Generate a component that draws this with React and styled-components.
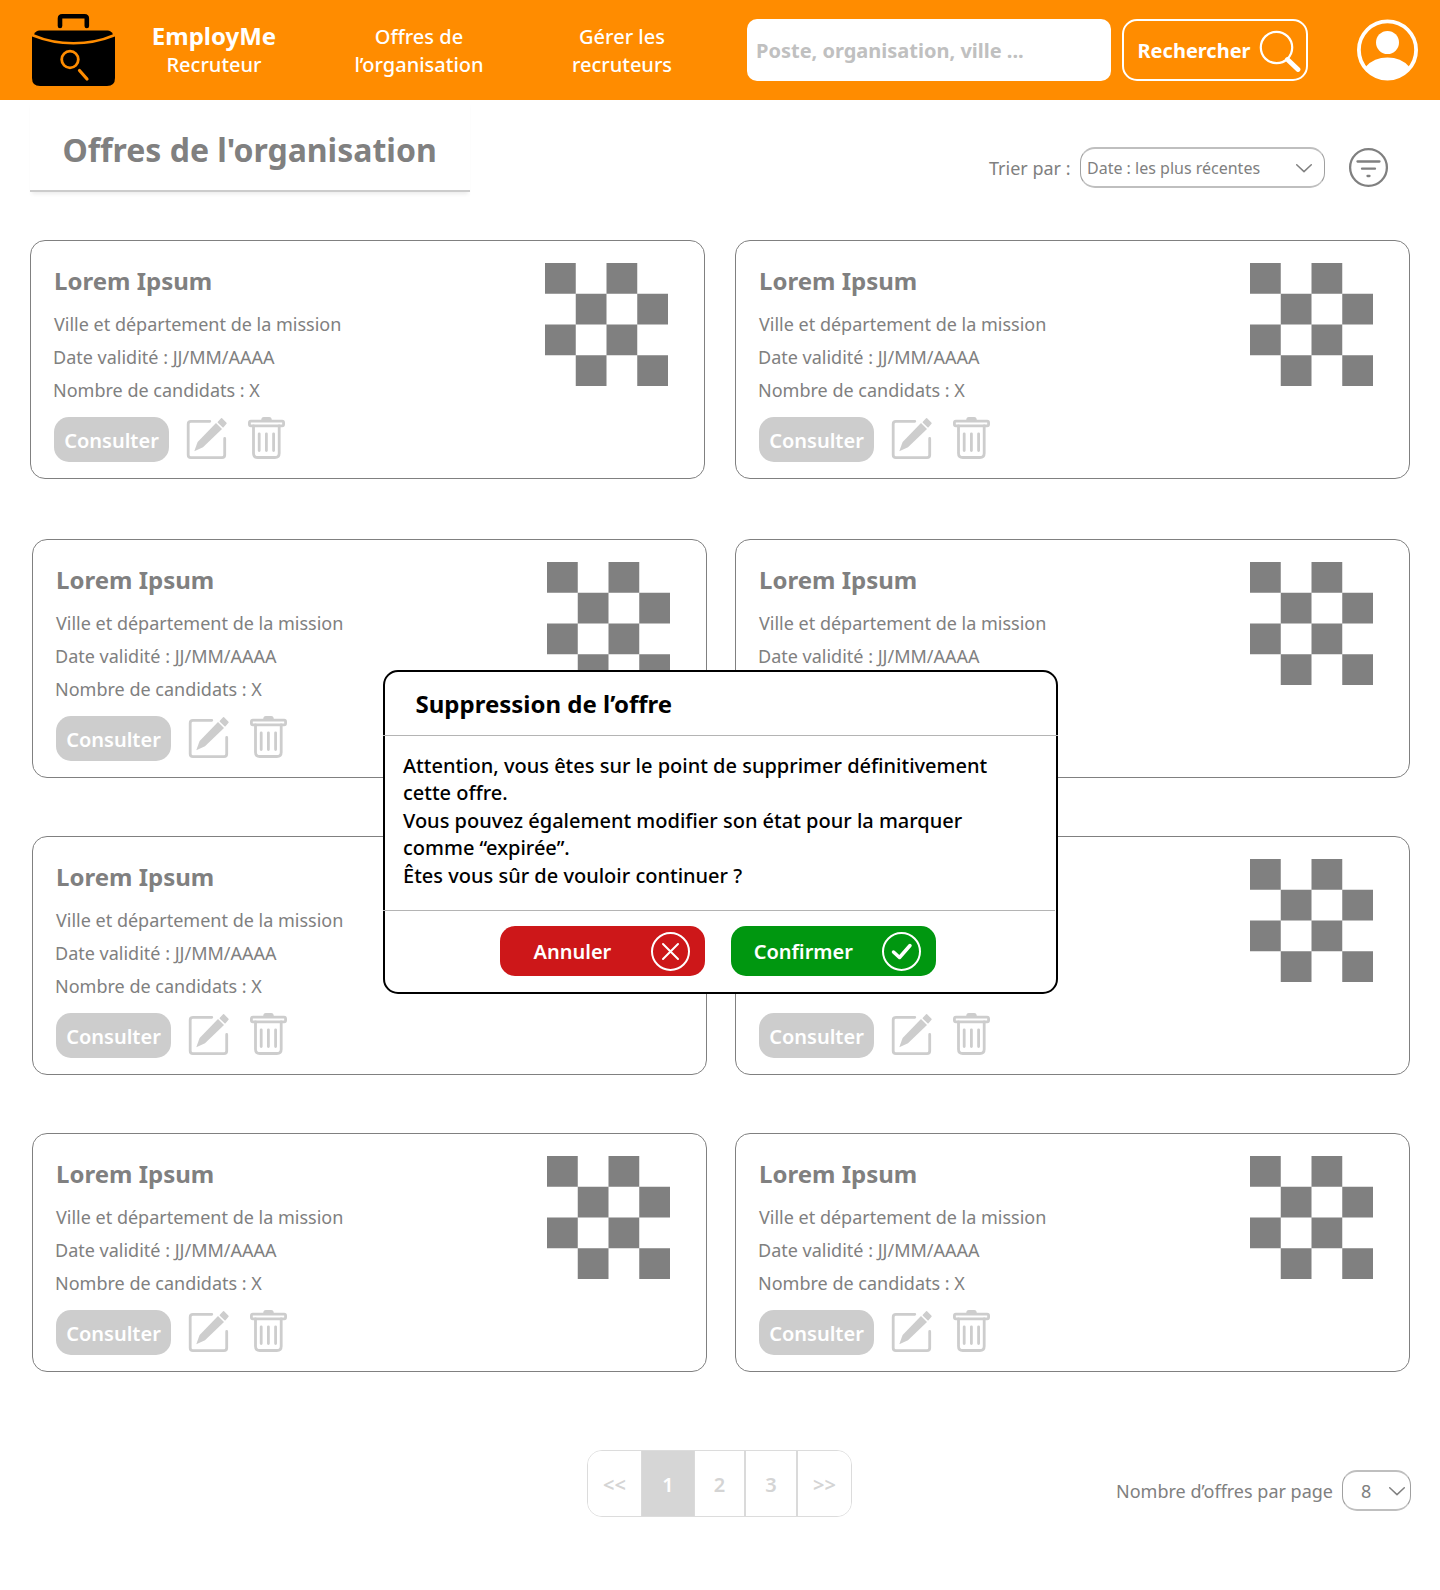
import React from "react";
import styled, { createGlobalStyle } from "styled-components";

const GlobalStyle = createGlobalStyle`
  *, *::before, *::after { box-sizing: border-box; }
  body { margin: 0; background: #fff; font-family: "Noto Sans", sans-serif; color: #808080; }
  h1, h2, p { margin: 0; }
  button, input { font-family: inherit; margin: 0; }
  svg { display: block; flex: none; }
`;

const Page = styled.div`
  position: relative;
  width: 1440px;
  height: 1590px;
  overflow: hidden;
`;

const Header = styled.header`
  display: flex;
  height: 100px;
  padding-left: 32px;
  background: #ff8c00;
  color: #fff;
`;

const Logo = styled.svg`
  margin-top: 14px;
`;

const Brand = styled.div`
  width: 160px;
  margin-left: 19px;
  padding-top: 21px;
  text-align: center;
  font-size: 20px;
  font-weight: 500;
  line-height: 28px;
`;

const BrandName = styled.div`
  height: 30px;
  font-size: 24px;
  font-weight: 700;
  line-height: 29px;
`;

const NavLink = styled.a`
  width: 160px;
  margin-left: ${(p) => p.$gap}px;
  padding-top: 23px;
  text-align: center;
  font-size: 20px;
  font-weight: 500;
  line-height: 28px;
`;

const SearchInput = styled.input`
  width: 364px;
  height: 62px;
  margin: 19px 0 0 45px;
  padding: 0 9px;
  border: 0;
  border-radius: 10px;
  background: #fff;
  font-size: 20px;
  font-weight: 700;
  &::placeholder { color: #c0c0c0; opacity: 1; }
`;

const SearchButton = styled.button`
  display: flex;
  align-items: center;
  width: 186px;
  height: 62px;
  margin: 19px 49px 0 11px;
  padding: 1px 5px 0 13.5px;
  border: 2px solid #fff;
  border-radius: 15px;
  background: none;
  color: #fff;
  font-size: 20px;
  font-weight: 700;
  justify-content: space-between;
`;

const Avatar = styled.svg`
  margin-top: 19px;
`;

const Toolbar = styled.div`
  display: flex;
  align-items: flex-start;
  height: 140px;
  padding-left: 30px;
`;

const Title = styled.h1`
  width: 440px;
  height: 92px;
  padding: 28px 0 0 32.5px;
  border-bottom: 2px solid #ccc;
  box-shadow: 0 4px 4px -2px rgba(0, 0, 0, 0.08);
  font-size: 32px;
  font-weight: 700;
  line-height: 43px;
`;

const SortLabel = styled.span`
  width: 91px;
  margin: 56px 0 0 519px;
  font-size: 18px;
  line-height: 25px;
`;

const SortSelect = styled.div`
  display: flex;
  align-items: center;
  justify-content: space-between;
  width: 245px;
  height: 41px;
  margin: 47px 23px 0 0;
  padding: 1px 12px 0 6px;
  border: 1px solid #a0a0a0;
  border-width: 2px 1px;
  border-top-color: #bfbfbf;
  border-bottom-color: #bfbfbf;
  border-radius: 15px;
  font-size: 16px;
`;

const FilterIcon = styled.svg`
  margin-top: 47px;
`;

const Board = styled.main`
  display: flex;
  gap: 28px;
  padding-left: 30px;
`;

const Column = styled.div`
  display: flex;
  flex-direction: column;
  gap: 58px;
  width: 677px;
`;

const Card = styled.article`
  display: flex;
  justify-content: space-between;
  width: 675px;
  height: 239px;
  margin-left: ${(p) => p.$shift}px;
  margin-bottom: ${(p) => (p.$first ? 2 : 0)}px;
  padding: 22px 36px 0 22px;
  border: 1px solid #808080;
  border-radius: 15px;
`;

const Details = styled.div`
  display: flex;
  flex-direction: column;
`;

const CardTitle = styled.h2`
  margin: 1px 0 11px 1px;
  font-size: 24px;
  font-weight: 700;
  line-height: 33px;
`;

const Line = styled.p`
  font-size: 18px;
  line-height: 33px;
  padding-left: ${(p) => p.$indent || 0}px;
`;

const Actions = styled.div`
  display: flex;
  margin: 10px 0 0 1px;
`;

const ConsultButton = styled.button`
  width: 115px;
  height: 45px;
  padding: 2px 0 0;
  border: 0;
  border-radius: 15px;
  background: #cdcdcd;
  color: #fff;
  font-size: 20px;
  font-weight: 600;
`;

const EditGlyph = styled.svg`
  margin-left: 17px;
`;

const TrashGlyph = styled.svg`
  margin-left: 20px;
`;

const Footer = styled.footer`
  display: flex;
  padding: 78px 0 0 587px;
`;

const Pager = styled.nav`
  display: flex;
  width: 265px;
  height: 67px;
  border: 1px solid #dcdcdc;
  border-radius: 15px;
  overflow: hidden;
`;

const PageCell = styled.span`
  display: flex;
  align-items: center;
  justify-content: center;
  width: ${(p) => p.$w}px;
  padding-top: 1px;
  border-right: ${(p) => p.$line || 0}px solid #dadada;
  background: ${(p) => (p.$active ? "#d6d6d6" : "#fff")};
  color: ${(p) => (p.$active ? "#fff" : "#d4d4d4")};
  font-size: 20px;
  font-weight: 600;
`;

const PerPageLabel = styled.span`
  width: 226px;
  margin: 29px 0 0 264px;
  font-size: 18px;
  line-height: 25px;
`;

const PerPageSelect = styled.div`
  display: flex;
  align-items: center;
  justify-content: space-between;
  width: 69px;
  height: 41px;
  margin-top: 20px;
  padding: 1px 5px 0 18px;
  border: 1px solid #a0a0a0;
  border-width: 2px 1px;
  border-top-color: #bfbfbf;
  border-bottom-color: #bfbfbf;
  border-radius: 15px;
  font-size: 18px;
`;

const Dialog = styled.section`
  position: absolute;
  left: 383px;
  top: 670px;
  width: 675px;
  height: 324px;
  border: 2px solid #000;
  border-radius: 15px;
  background: #fff;
  color: #000;
`;

const DialogTitle = styled.h2`
  height: 64px;
  margin: 0 -2px;
  padding: 15px 0 0 32.5px;
  border-bottom: 1px solid #b4b4b4;
  font-size: 24px;
  font-weight: 700;
  line-height: 33px;
`;

const DialogBody = styled.div`
  height: 175px;
  margin: 0 1px 0 -2px;
  padding: 15.75px 0 0 20px;
  border-bottom: 1px solid #b4b4b4;
  font-size: 20px;
  font-weight: 500;
  line-height: 27.5px;
`;

const DialogActions = styled.div`
  display: flex;
  gap: 26px;
  padding: 15px 0 0 115px;
`;

const DialogButton = styled.button`
  display: flex;
  align-items: center;
  justify-content: space-between;
  width: 205px;
  height: 50px;
  padding: 0 15px 0 ${(p) => p.$pad}px;
  border: 0;
  border-radius: 15px;
  background: ${(p) => p.$bg};
  color: #fff;
  font-size: 20px;
  font-weight: 600;
`;

const Chevron = () => (
  <svg width="16" height="9" viewBox="0 0 16 9" fill="none" stroke="#808080" strokeWidth="1.5">
    <path d="M.7.8 8 7.6 15.3.8" strokeLinecap="round" strokeLinejoin="round" />
  </svg>
);

const Checker = () => (
  <svg width="123" height="123" viewBox="0 0 4 4" fill="#808080">
    <path d="M0 0h1v1H0zM2 0h1v1H2zM1 1h1v1H1zM3 1h1v1H3zM0 2h1v1H0zM2 2h1v1H2zM1 3h1v1H1zM3 3h1v1H3z" />
  </svg>
);

const Edit = () => (
  <EditGlyph width="42" height="45" viewBox="0 0 42 45" fill="none">
    <path d="M23.8 4.300H5Q2.200 4.300 2.200 7V38Q2.200 40.700 5 40.700H36Q38.700 40.700 38.700 38V21.500" stroke="#cdcdcd" strokeWidth="2.800" strokeLinecap="round" />
    <path d="M30 6 36 12 17 30.300 8.300 34.200 11.600 25Z" fill="#cdcdcd" />
    <path d="M35.600 1.700 40 6.300 37 9.700 32.300 5.200Z" fill="#cdcdcd" stroke="#cdcdcd" strokeWidth="1.400" strokeLinejoin="round" />
  </EditGlyph>
);

const Trash = () => (
  <TrashGlyph width="37" height="45" viewBox="0 0 37 45" fill="none" stroke="#cdcdcd" strokeWidth="2.800" strokeLinecap="round" strokeLinejoin="round">
    <rect x="1.400" y="4.200" width="34.200" height="4.600" rx="1.500" />
    <path d="M5.500 9V36.200Q5.500 40.500 9.800 40.500H26.800Q31.200 40.500 31.200 36.200V9M11.200 16.800V33.500M18.400 16.800V33.500M25.600 16.800V33.500" />
    <path d="M14.600 2.600Q14.800 1.500 15.700 1.500H21.300Q22.200 1.500 22.400 2.600" />
  </TrashGlyph>
);

const Offer = ({ shift, first }) => (
  <Card $shift={shift} $first={first}>
    <Details>
      <CardTitle>Lorem Ipsum</CardTitle>
      <Line $indent={1}>Ville et département de la mission</Line>
      <Line>Date validité : JJ/MM/AAAA</Line>
      <Line>Nombre de candidats : X</Line>
      <Actions>
        <ConsultButton>Consulter</ConsultButton>
        <Edit />
        <Trash />
      </Actions>
    </Details>
    <Checker />
  </Card>
);

export default function App() {
  return (
    <Page>
      <GlobalStyle />
      <Header>
        <Logo width="83" height="72" viewBox="0 0 83 72" fill="none">
          <path d="M28 12V4.500Q28 2.300 30.200 2.300H52.600Q54.800 2.300 54.800 4.500V12" stroke="#000" strokeWidth="4.600" strokeLinecap="round" />
          <path d="M2 20.200Q4 16.500 7.500 16.500H75.500Q79 16.500 81 20.200Q63 28 41.500 28T2 20.200Z" fill="#000" />
          <path d="M0 22.500Q20 30.500 41.500 30.500T83 22.500V64Q83 72 75 72H8Q0 72 0 64Z" fill="#000" />
          <circle cx="38" cy="45.500" r="8.300" stroke="#ff8c00" strokeWidth="2.800" />
          <path d="M47.500 56.500 55 65" stroke="#ff8c00" strokeWidth="3.200" strokeLinecap="round" />
        </Logo>
        <Brand>
          <BrandName>EmployMe</BrandName>
          Recruteur
        </Brand>
        <NavLink $gap={45}>
          Offres de
          <br />
          l’organisation
        </NavLink>
        <NavLink $gap={43}>
          Gérer les
          <br />
          recruteurs
        </NavLink>
        <SearchInput placeholder="Poste, organisation, ville ..." />
        <SearchButton>
          Rechercher
          <svg width="42" height="42" viewBox="0 0 42 42" fill="none" stroke="#fff" strokeLinecap="round">
            <circle cx="17.500" cy="17.500" r="15.700" strokeWidth="2.200" />
            <path d="M28.500 29.500 39 39.500" strokeWidth="4.800" />
          </svg>
        </SearchButton>
        <Avatar width="61" height="62" viewBox="0 0 61 62">
          <circle cx="30.500" cy="31" r="28.600" fill="none" stroke="#fff" strokeWidth="3.800" />
          <circle cx="30.500" cy="23.500" r="11.500" fill="#fff" />
          <path d="M9 47.500Q17 38.500 30.500 38.500T52 47.500Q44 60 30.500 60T9 47.500Z" fill="#fff" />
        </Avatar>
      </Header>
      <Toolbar>
        <Title>Offres de l'organisation</Title>
        <SortLabel>Trier par :</SortLabel>
        <SortSelect>
          Date : les plus récentes
          <Chevron />
        </SortSelect>
        <FilterIcon width="41" height="41" viewBox="0 0 41 41" fill="none" stroke="#808080" strokeWidth="2.300" strokeLinecap="round">
          <circle cx="20.500" cy="20.500" r="18.400" />
          <path d="M9.500 14.500h22M14 21.700h13M19.500 29h2" />
        </FilterIcon>
      </Toolbar>
      <Board>
        <Column>
          <Offer shift={0} first />
          <Offer shift={2} />
          <Offer shift={2} />
          <Offer shift={2} />
        </Column>
        <Column>
          <Offer shift={0} first />
          <Offer shift={0} />
          <Offer shift={0} />
          <Offer shift={0} />
        </Column>
      </Board>
      <Footer>
        <Pager>
          <PageCell $w={54} $line={1}>&lt;&lt;</PageCell>
          <PageCell $w={53} $line={1} $active>1</PageCell>
          <PageCell $w={51} $line={2}>2</PageCell>
          <PageCell $w={52} $line={2}>3</PageCell>
          <PageCell $w={53}>&gt;&gt;</PageCell>
        </Pager>
        <PerPageLabel>Nombre d’offres par page</PerPageLabel>
        <PerPageSelect>
          8
          <Chevron />
        </PerPageSelect>
      </Footer>
      <Dialog role="dialog">
        <DialogTitle>Suppression de l’offre</DialogTitle>
        <DialogBody>
          Attention, vous êtes sur le point de supprimer définitivement
          <br />
          cette offre.
          <br />
          Vous pouvez également modifier son état pour la marquer
          <br />
          comme “expirée”.
          <br />
          Êtes vous sûr de vouloir continuer ?
        </DialogBody>
        <DialogActions>
          <DialogButton $bg="#cd1719" $pad={33.5}>
            Annuler
            <svg width="39" height="39" viewBox="0 0 39 39" fill="none" stroke="#fff" strokeWidth="2" strokeLinecap="round">
              <circle cx="19.500" cy="19.500" r="18.500" />
              <path d="M12 12 27 27M27 12 12 27" />
            </svg>
          </DialogButton>
          <DialogButton $bg="#009710" $pad={22.7}>
            Confirmer
            <svg width="39" height="39" viewBox="0 0 39 39" fill="none" stroke="#fff" strokeLinecap="round" strokeLinejoin="round">
              <circle cx="19.500" cy="19.500" r="18.500" strokeWidth="2" />
              <path d="M11.500 20 17.500 25.500 28 13.500" strokeWidth="3.500" />
            </svg>
          </DialogButton>
        </DialogActions>
      </Dialog>
    </Page>
  );
}
